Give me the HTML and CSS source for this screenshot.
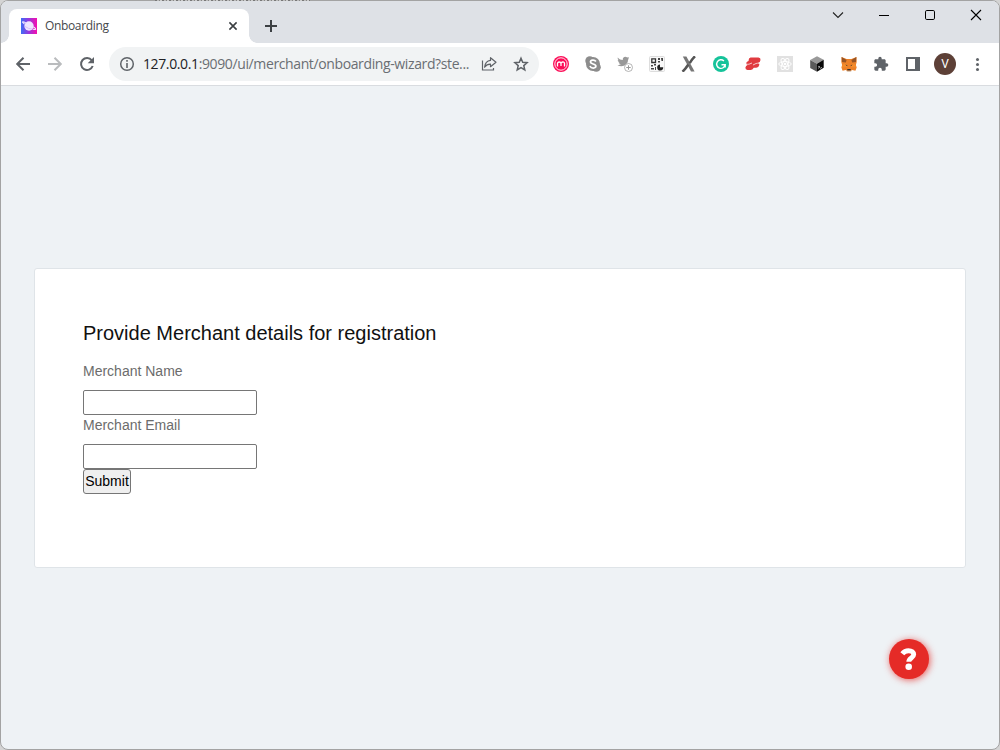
FILE: index.html
```html
<!DOCTYPE html>
<html lang="en">
<head>
<meta charset="utf-8">
<title>Onboarding</title>
<link rel="stylesheet" href="styles.css">
</head>
<body>
<div class="window">
  <header class="tabstrip">
    <div class="tab">
      <svg class="favicon" width="16" height="16" viewBox="0 0 16 16"><defs><linearGradient id="fav"><stop offset="0" stop-color="#3d6df5"/><stop offset=".5" stop-color="#9a35dc"/><stop offset="1" stop-color="#f50fae"/></linearGradient></defs><path fill="url(#fav)" d="M0 0h16v16H0z"/><circle cx="8" cy="8" r="4.700" fill="#eee4ff"/><path d="M3.500 6C1.400 4.500 1 3.700 1.800 3.700c.8 0 2 .5 3 1M12.300 8.800c2 1.300 2.600 2.300 2.200 2.500-.5.300-1.600 0-2.700-.4" fill="none" stroke="#f1e9ff" stroke-width="1.100"/><path d="M4 8.500q3.500 2.500 7.500 2.600" fill="none" stroke="#cfaef4" stroke-width=".7"/></svg>
      <span class="tab-title">Onboarding</span>
      <svg class="tab-close" width="16" height="16" viewBox="0 0 16 16"><path d="M4.400 4.400l7.200 7.200M11.600 4.400l-7.200 7.200" stroke="#3c4043" stroke-width="1.600"/></svg>
    </div>
    <svg class="new-tab" width="16" height="16" viewBox="0 0 16 16"><path d="M8 2v12M2 8h12" stroke="#3c4043" stroke-width="2"/></svg>
    <div class="window-controls">
      <svg width="46" height="28" viewBox="0 0 46 28"><path d="M18 11.500l5 5 5-5" fill="none" stroke="#222" stroke-width="1.100"/></svg>
      <svg width="46" height="28" viewBox="0 0 46 28"><path d="M18 14.500h10" stroke="#000"/></svg>
      <svg width="46" height="28" viewBox="0 0 46 28"><rect x="18.500" y="9.500" width="9" height="9" rx="1.300" fill="none" stroke="#000"/></svg>
      <svg width="46" height="28" viewBox="0 0 46 28"><path d="M18 9l10 10M28 9L18 19" stroke="#000" stroke-width="1.100"/></svg>
    </div>
  </header>

  <nav class="toolbar">
    <span class="slot"><svg width="16" height="16" viewBox="0 0 16 16"><path d="M15 8H2.500M8.500 1.700L2.200 8l6.300 6.300" fill="none" stroke="#5f6368" stroke-width="2"/></svg></span>
    <span class="slot"><svg width="16" height="16" viewBox="0 0 16 16"><path d="M1 8h12.500M7.500 1.700L13.800 8l-6.300 6.300" fill="none" stroke="#babcbe" stroke-width="2"/></svg></span>
    <span class="slot"><svg width="16" height="16" viewBox="0 0 16 16"><path d="M12.800 4.300A6 6 0 1 0 13.700 10" fill="none" stroke="#5f6368" stroke-width="2"/><path d="M15 1v6.300H8.700z" fill="#5f6368"/></svg></span>
    <div class="omnibox">
      <svg width="16" height="16" viewBox="0 0 16 16"><circle cx="8" cy="8" r="6.300" fill="none" stroke="#5f6368" stroke-width="1.500"/><path d="M8 4v1.700M8 7v5" stroke="#5f6368" stroke-width="1.600"/></svg>
      <span class="url"><b class="host">127.0.0.1</b>:9090/ui/merchant/onboarding-wizard?ste...</span>
      <svg class="share" width="16" height="16" viewBox="0 0 16 16"><path d="M1.500 4.500v9.500h11v-2" fill="none" stroke="#5f6368" stroke-width="1.200"/><path d="M9.500 1.700L15 6.200l-5.500 4.500V8.200C6.800 8.100 5 9.300 3.600 11.200 4 7.500 6 4.800 9.500 4.400z" fill="none" stroke="#5f6368" stroke-width="1.200" stroke-linejoin="round"/></svg>
      <svg width="16" height="16" viewBox="0 0 16 16"><path d="M8 2.200l1.700 4.100 4.400.4-3.300 2.900 1 4.400L8 11.700 4.200 14l1-4.400-3.300-2.900 4.400-.4z" fill="none" stroke="#5f6368" stroke-width="1.500"/></svg>
    </div>
    <div class="extensions">
      <span class="slot"><svg width="16" height="16" viewBox="0 0 16 16"><circle cx="8" cy="8" r="8" fill="#fc0d57"/><circle cx="8" cy="8" r="6.200" fill="none" stroke="#fff" stroke-width=".9"/><path d="M4.500 10.500V7.500Q4.500 6 6.200 6T8 7.500V10M8 7.500Q8 6 9.800 6T11.500 7.500V10.500" fill="none" stroke="#fff" stroke-width="1.300"/></svg></span>
      <span class="slot"><svg width="16" height="16" viewBox="0 0 16 16"><circle cx="4.800" cy="4.800" r="4.500" fill="#8c8c8c"/><circle cx="11.300" cy="11.300" r="4.500" fill="#8c8c8c"/><circle cx="8" cy="8" r="7" fill="#8c8c8c"/><path d="M10.900 5.500C9.500 3.300 5.300 3.800 5.500 6.100c.2 2.400 5.400 1.300 5.400 4 0 2.500-4.700 2.700-6-.1" fill="none" stroke="#fff" stroke-width="1.700"/></svg></span>
      <span class="slot"><svg width="16" height="16" viewBox="0 0 16 16"><path d="M.8 1.500C2.500 3.300 3.800 3.900 5.800 4c-.4-3.400 3-4.100 4.400-2.400L12 1l-.9 1.600 1-.1-1.100 1.300C11 9 5.500 12 .5 9.200c1.600 0 2.500-.3 3.400-1.100C2.600 8 1.900 7.200 1.600 6.400h1C1.200 5.800.8 4.800.8 3.900l.9.300C.7 3.400.5 2.500.8 1.500z" fill="#999"/><circle cx="11.500" cy="11.500" r="4" fill="#fff" stroke="#aaa" stroke-width=".9"/><path d="M9.300 11.500h4.400M11.500 9.300v4.400" stroke="#999"/></svg></span>
      <span class="slot"><svg width="16" height="16" viewBox="0 0 16 16"><rect x=".5" y=".5" width="15" height="15" rx="1" fill="#f8f8f8" stroke="#ddd"/><path d="M2.800 2.800h3.700v3.700H2.800z" fill="none" stroke="#333" stroke-width="1.300"/><path d="M9 2h2v2H9zm3 0h2v3h-1.500zM9 5h2v1.500H9zM2 9h2v1.500H2zm3-1h2v1.500H5zm-3 4h3v1.500H2zm4-1h1v3H6z" fill="#444"/><path d="M11 8.500v2.800h3.200A3 3 0 1 1 11 8.500z" fill="#222"/></svg></span>
      <span class="slot"><svg width="16" height="16" viewBox="0 0 16 16"><path d="M1.800.5h3.600L13.600 15.500H10z" fill="#777"/><path d="M14 .3Q11.500 2.500 8.700 7.200M7.300 8.500Q4.500 13 1.500 15.700" fill="none" stroke="#555" stroke-width="2.500"/></svg></span>
      <span class="slot"><svg width="16" height="16" viewBox="0 0 16 16"><circle cx="8" cy="8" r="8" fill="#15c39a"/><path d="M10.900 4.900A4.300 4.300 0 1 0 12.200 8.700H8.500M12.200 8.700v2.700" fill="none" stroke="#fff" stroke-width="1.400"/></svg></span>
      <span class="slot"><svg width="16" height="16" viewBox="0 0 16 16"><path d="M5.500 1.500h8q2.300.2 2 2.400-.4 2.300-2.300 2.900 1.500.6 1.100 2.300-.6 2.500-3 2.700H8.800Q7.500 14 5.500 14H2.500Q.2 13.700.4 11.500.8 9.500 2.500 9 .8 8.300 1.300 6.800 1.800 5.200 3.500 4.900 3.500 2 5.500 1.500z" fill="#e03b40"/><path d="M1.500 7.900Q2.500 8.500 4 8.200L7 7M14 7.300Q12.700 7 11 7.500L8 9" fill="none" stroke="#fff" stroke-width=".7"/></svg></span>
      <span class="slot"><svg width="16" height="16" viewBox="0 0 16 16"><path fill="#e1e1e1" d="M0 0h16v16H0z"/><g fill="none" stroke="#fff" stroke-width="1"><ellipse cx="8" cy="8" rx="6.200" ry="2.500"/><ellipse cx="8" cy="8" rx="6.200" ry="2.500" transform="rotate(60 8 8)"/><ellipse cx="8" cy="8" rx="6.200" ry="2.500" transform="rotate(120 8 8)"/></g><circle cx="8" cy="8" r="1.300" fill="#fff"/></svg></span>
      <span class="slot"><svg width="16" height="16" viewBox="0 0 16 16"><path d="M8 .3l6.700 3.500L8 7.700 1.200 4z" fill="#999"/><path d="M1.200 4L8 7.700v8L1.200 12z" fill="#5a5a5a"/><path d="M8 7.700l6.700-3.900v8L8 15.700z" fill="#080808"/><path d="M9.300 10.300l1.500.6-1.500 1.300M11.300 12.300l1.500-.8" fill="none" stroke="#fff" stroke-width=".8"/></svg></span>
      <span class="slot"><svg width="16" height="16" viewBox="0 0 16 16"><path d="M.6 1l5 2h4.800l5-2 .3 5-.8 3 .8 2.500-1.300 3.300-3.300-.8-1.600 1.200H6.400L4.800 14l-3.200.8L.4 11.500 1.100 9 .3 6z" fill="#ed8128"/><path d="M.6 1l5 3-.8 2.500L1 6zM15.400 1l-5 3 .8 2.500L15 6z" fill="#965425"/><path d="M1.100 9l3.700-2 1.500 4-5 .5zM14.900 9l-3.700-2-1.500 4 5 .5z" fill="#f58c2b"/><path d="M4.300 8.500l2 .8-.2 1zM11.700 8.500l-2 .8.200 1zM6.300 13h3.400v1.500H6.300z" fill="#333"/><path d="M5.700 14.700h4.600v.8H5.700z" fill="#c9b9aa"/></svg></span>
      <span class="slot"><svg width="16" height="16" viewBox="0 0 24 24"><path d="M20.500 11H19V7c0-1.100-.9-2-2-2h-4V3.500a2.500 2.500 0 0 0-5 0V5H4c-1.100 0-2 .9-2 2v3.800h1.500a2.700 2.700 0 0 1 0 5.400H2V20c0 1.100.9 2 2 2h3.800v-1.500a2.700 2.700 0 0 1 5.400 0V22H17c1.100 0 2-.9 2-2v-4h1.500a2.500 2.500 0 0 0 0-5z" fill="#5f6368"/></svg></span>
      <span class="slot"><svg width="16" height="16" viewBox="0 0 16 16"><path d="M1 1h14v14H1zM3 3v10h7V3z" fill="#5f6368" fill-rule="evenodd"/></svg></span>
      <span class="slot"><span class="avatar">V</span></span>
      <span class="slot"><svg width="16" height="16" viewBox="0 0 16 16"><g fill="#5f6368"><circle cx="8.500" cy="3.500" r="1.500"/><circle cx="8.500" cy="8.500" r="1.500"/><circle cx="8.500" cy="13.500" r="1.500"/></g></svg></span>
    </div>
  </nav>

  <main class="page">
    <form class="card">
      <h1 class="heading">Provide Merchant details for registration</h1>
      <label class="label" for="name">Merchant Name</label>
      <input class="field" id="name" type="text">
      <label class="label" for="email">Merchant Email</label>
      <input class="field" id="email" type="text">
      <button class="submit" type="button">Submit</button>
    </form>
    <button class="help" aria-label="Help"><svg width="18" height="24" viewBox="0 0 18 24"><path d="M2.300 6.800Q4.700 3.700 8.500 3.700c3.200 0 5.200 1.500 5.200 3.900 0 3.500-4.900 3.400-4.900 7.200" fill="none" stroke="#fff" stroke-width="4.900"/><circle cx="8.700" cy="19.700" r="3.300" fill="#fff"/></svg></button>
  </main>
</div>
<div class="backdrop-text"></div>
</body>
</html>
```
FILE: styles.css
```css
* { box-sizing: border-box; }
body { margin: 0; background: #d4d4d4; font-family: "Liberation Sans", Arial, sans-serif; }
svg { display: block; flex: none; }

.window {
  height: 750px;
  display: flex;
  flex-direction: column;
  border: 1px solid #a3a3a3;
  border-radius: 8px;
  overflow: hidden;
  background: #eef2f5;
}

/* Tab strip */
.tabstrip {
  flex: none;
  height: 42px;
  display: flex;
  align-items: flex-start;
  padding-left: 8px;
  background: #dee1e6;
}
.tab {
  position: relative;
  width: 240px;
  height: 34px;
  margin-top: 8px;
  padding: 0 8px 0 12px;
  display: flex;
  align-items: center;
  background: #fff;
  border-radius: 8px 8px 0 0;
}
.tab::before, .tab::after {
  content: "";
  position: absolute;
  bottom: 0;
  width: 8px;
  height: 8px;
}
.tab::before { left: -8px; background: radial-gradient(circle at 0 0, #dee1e6 7.5px, #fff 8px); }
.tab::after { right: -8px; background: radial-gradient(circle at 100% 0, #dee1e6 7.5px, #fff 8px); }
.tab-title {
  flex: 1;
  margin-left: 8px;
  font: 12px/16px "Open Sans", sans-serif;
  letter-spacing: -0.35px;
  color: #45484c;
}
.new-tab { margin: 17px 0 0 14px; }
.window-controls { display: flex; margin-left: auto; }

/* Sliver of the window behind, along the top edge */
.backdrop-text {
  position: absolute;
  left: 155px;
  top: 0;
  width: 155px;
  height: 1px;
  background: repeating-linear-gradient(90deg, #777 0 2px, #bbb 2px 4px, #888 4px 5px, #ccc 5px 7px);
}

/* Toolbar */
.toolbar {
  flex: none;
  height: 43px;
  display: flex;
  align-items: center;
  padding-left: 6px;
  background: #fff;
  border-bottom: 1px solid #d9dce0;
}
.slot {
  width: 32px;
  height: 32px;
  flex: none;
  display: flex;
  align-items: center;
  justify-content: center;
}
.omnibox {
  width: 430px;
  height: 34px;
  margin: 0 6px;
  padding: 0 10px;
  display: flex;
  align-items: center;
  background: #f1f3f4;
  border-radius: 17px;
}
.url {
  flex: 1;
  margin-left: 8px;
  font: 14px/20px "Open Sans", sans-serif;
  letter-spacing: -0.38px;
  white-space: nowrap;
  color: #6a6e73;
}
.host { font-weight: 400; color: #202124; }
.share { margin-right: 16px; }
.extensions { display: flex; }
.avatar {
  width: 22px;
  height: 22px;
  border-radius: 50%;
  background: #5d4037;
  color: #fff;
  font: 12px/22px Roboto, sans-serif;
  text-align: center;
}

/* Page */
.page { flex: 1; padding: 182px 33px 0; position: relative; }
.card {
  height: 300px;
  display: flex;
  flex-direction: column;
  align-items: flex-start;
  padding: 47px;
  padding-left: 48px;
  background: #fff;
  border: 1px solid #dfe4e8;
  border-radius: 3px;
}
.heading {
  margin: 5px 0 14px;
  font-size: 20px;
  line-height: 24px;
  font-weight: 400;
  color: #111;
}
.label { height: 31px; font-size: 14px; line-height: 24px; color: #6c6c6c; }
.field {
  width: 174px;
  height: 25px;
  margin: 0;
  padding: 1px 2px;
  border: 1px solid #767676;
  border-radius: 2px;
}
.field + .label { height: 29px; line-height: 21px; }
.submit {
  width: 48px;
  height: 25px;
  padding: 0 0 2px;
  border: 1px solid #767676;
  border-radius: 3px;
  background: #efefef;
  font: 14px "Liberation Sans", Arial, sans-serif;
  color: #000;
}
.help {
  position: absolute;
  right: 70px;
  bottom: 70px;
  width: 40px;
  height: 40px;
  padding: 0;
  border: 0;
  border-radius: 50%;
  display: flex;
  align-items: center;
  justify-content: center;
  background: #e52b27;
  box-shadow: 1px 1px 7px rgba(229, 43, 39, .75);
}
```
